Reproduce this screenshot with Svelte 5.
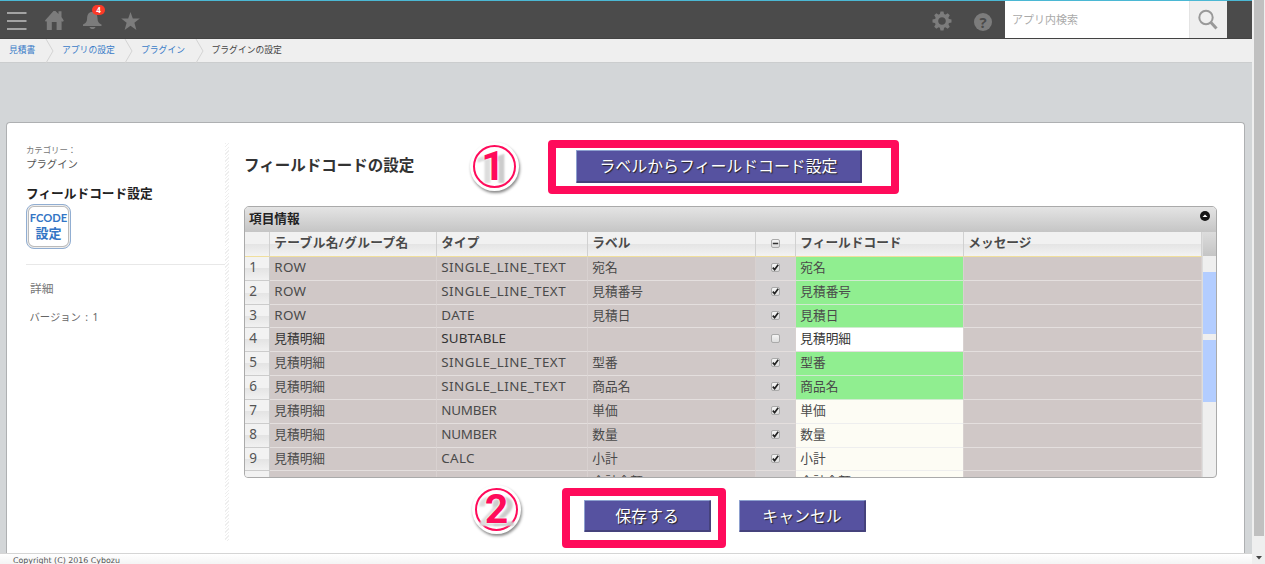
<script>
  const rows = [
    ['1', 'ROW', 'SINGLE_LINE_TEXT', '宛名', true, 'green'],
    ['2', 'ROW', 'SINGLE_LINE_TEXT', '見積番号', true, 'green'],
    ['3', 'ROW', 'DATE', '見積日', true, 'green'],
    ['4', '見積明細', 'SUBTABLE', '', false, 'white', '見積明細'],
    ['5', '見積明細', 'SINGLE_LINE_TEXT', '型番', true, 'green'],
    ['6', '見積明細', 'SINGLE_LINE_TEXT', '商品名', true, 'green'],
    ['7', '見積明細', 'NUMBER', '単価', true, 'cream'],
    ['8', '見積明細', 'NUMBER', '数量', true, 'cream'],
    ['9', '見積明細', 'CALC', '小計', true, 'cream'],
    ['', '', '', '合計金額', false, 'cream']
  ];
  const crumbs = [['見積書', 53], ['アプリの設定', 79], ['プラグイン', 70.5]];
  const tracking = { ROW: 0.3, SINGLE_LINE_TEXT: 0.45, DATE: 0.4, SUBTABLE: 0.1, NUMBER: -0.2, CALC: 0.3 };
</script>

<div class="window">
  <div class="page">
    <header>
      <svg class="menu" viewBox="0 0 20 20"><path d="M0 2h19.500M0 10h19.500M0 18h19.500" stroke="#a3a3a3" stroke-width="2" /></svg>
      <svg class="home" viewBox="0 0 20 20"><path d="M0 10.500 8.500 1h2l3 3V1.200h3V7l2.300 3.500-.8 1.200-1.400-.5V20h-5v-8H6.800v8h-5v-8.800l-1 .5z" fill="#7c7c7c" /></svg>
      <div class="bell">
        <svg viewBox="0 0 20 20"><path d="M9.300 2c3.800 0 5 2.700 5.200 6.200.2 3.900 1.300 4.700 4 6.300v1.500H0v-1.500c2.800-1.600 3.900-2.400 4.100-6.300C4.300 4.700 5.500 2 9.300 2zM6.500 17h6c-1 2.800-5 2.800-6 0z" fill="#7c7c7c" /></svg>
        <b>4</b>
      </div>
      <svg class="star" viewBox="0 0 20 20"><path d="m9.500 1 2.300 6.500h7l-5.400 4.300 2 7.200-5.900-4.200-5.900 4.200 2-7.200L.2 7.500h7z" fill="#7c7c7c" /></svg>
      <div class="grow"></div>
      <svg class="gear" viewBox="-10 -10 20 20">
        {#each [0, 45, 90, 135, 180, 225, 270, 315] as a}
          <path d="M-2.300-6-1.500-9.500h3L2.300-6z" fill="#7c7c7c" transform="rotate({a})" />
        {/each}
        <circle r="5.500" fill="none" stroke="#7c7c7c" stroke-width="3.400" />
      </svg>
      <div class="help">?</div>
      <div class="search">アプリ内検索</div>
      <div class="find"><svg viewBox="0 0 20 20"><circle cx="8" cy="7.500" r="6.700" fill="none" stroke="#999" stroke-width="2" /><path d="m12.500 12 6 6.500" stroke="#999" stroke-width="3" /></svg></div>
    </header>
    <nav>
      {#each crumbs as [name, w]}
        <a style="width:{w}px">{name}<svg viewBox="0 0 8 24"><path d="M0 0 7 12 0 24" fill="none" stroke="#d4d4d4" /></svg></a>
      {/each}
      <span>プラグインの設定</span>
    </nav>
    <div class="card">
      <aside>
        <small>カテゴリー：</small>
        <p class="cat">プラグイン</p>
        <h2>フィールドコード設定</h2>
        <div class="logo"><b>FCODE</b><b class="jp">設定</b></div>
        <hr />
        <p class="detail">詳細</p>
        <p class="version">バージョン<i>:</i>1</p>
      </aside>
      <div class="hatch"></div>
      <main>
        <div class="head">
          <h1>フィールドコードの設定</h1>
          <button class="wide">ラベルからフィールドコード設定</button>
        </div>
        <section class="grid">
          <div class="title">項目情報<svg viewBox="0 0 12 12"><circle cx="6" cy="6" r="5" fill="#151515" /><path d="M3.500 7 6 4.600 8.500 7z" fill="#fff" /></svg></div>
          <div class="body">
            <div class="table">
              <div class="tr th">
                <div></div><div class="group">テーブル名/グループ名</div><div>タイプ</div><div>ラベル</div><div class="ck"><span class="box"><svg viewBox="0 0 10 10"><path d="M2 5h6" stroke="#333" stroke-width="1.600" /></svg></span></div><div>フィールドコード</div><div>メッセージ</div>
              </div>
              {#each rows as r}
                <div class="tr" class:dark={r[0] === '4'}>
                  <div class="num">{r[0]}</div>
                  <div class:latin={r[1] in tracking} style="letter-spacing:{tracking[r[1]] ?? 0}px">{r[1]}</div>
                  <div class="latin" style="letter-spacing:{tracking[r[2]] ?? 0}px">{r[2]}</div>
                  <div>{r[3]}</div>
                  <div class="ck"><span class="box">{#if r[4]}<svg viewBox="0 0 10 10"><path d="m2 5.200 2 2.200L8 2" fill="none" stroke="#222" stroke-width="1.900" /></svg>{/if}</span></div>
                  <div class={r[5]}>{r[6] ?? r[3]}</div><div></div>
                </div>
              {/each}
            </div>
            <div class="bar"><div class="corner"></div><div class="thumb"></div><div class="thumb"></div></div>
          </div>
        </section>
        <div class="actions"><button>保存する</button><button>キャンセル</button></div>
      </main>
    </div>
    <footer>Copyright (C) 2016 Cybozu</footer>
  </div>
  <div class="scroll"><div></div><svg viewBox="0 0 6 4"><path d="M0 0h6L3 3.500z" fill="#444" /></svg></div>
  <div class="frame f1"></div>
  <div class="frame f2"></div>
  <div class="mark m1"><span>1</span></div>
  <div class="mark m2"><span>2</span></div>
</div>

<style>
  :global(body) { margin: 0; overflow: hidden; }
  * { box-sizing: border-box; }
  p, h1, h2 { margin: 0; }
  .window { position: relative; display: flex; width: 1265px; height: 564px; overflow: hidden; font-family: "Noto Sans", "Noto Sans CJK JP", sans-serif; color: #444; }
  .page { width: 1252px; height: 564px; display: flex; flex-direction: column; background: #d3d6d8; }
  svg { display: block; flex: none; overflow: visible; }
  header { height: 39px; flex: none; display: flex; align-items: center; background: #4b4b4b; border-top: 1px solid #4bb8d4; border-bottom: 1px solid #434343; padding: 0 25px 0 7px; }
  header svg { width: 20px; height: 20px; }
  .menu { margin-top: 3px; }
  .home { margin-left: 18px; }
  .bell { position: relative; margin: 1px 0 0 18px; }
  .bell b { position: absolute; left: 9px; top: -5px; width: 13px; height: 10px; border-radius: 5px; background: #fb3a28; color: #fff; font-size: 8px; line-height: 10px; text-align: center; }
  .star { margin: 3px 0 0 18px; }
  .grow { flex: 1; }
  .gear { margin-top: 2px; }
  .help { margin: 4px 13px 0 22.500px; width: 18px; height: 18px; border-radius: 50%; background: #7c7c7c; color: #4b4b4b; font: bold 15px/18px "Open Sans", sans-serif; text-align: center; }
  .search { align-self: stretch; width: 184px; background: #fff; color: #aaa; font: 11px/37px "Noto Sans CJK JP", sans-serif; padding-left: 7px; }
  .find { align-self: stretch; width: 38px; background: #efefef; border-left: 1px solid #e4e4e4; display: flex; align-items: center; justify-content: center; padding-right: 2px; }
  nav { height: 24px; flex: none; display: flex; background: #efefef; border-bottom: 1px solid #cbcdce; padding-left: 9px; font: 8.800px/22px "Noto Sans CJK JP", sans-serif; color: #444; }
  nav a { color: #3a7cc8; display: flex; flex: none; justify-content: space-between; padding-right: 8px; white-space: nowrap; }
  nav a svg { width: 8px; height: 24px; }
  .card { height: 431px; margin: 59px 7px 0 6px; flex: none; display: flex; background: #fff; border: 1px solid #aeb0b2; border-bottom: 0; border-radius: 4px 4px 0 0; }
  aside { width: 218px; padding: 19px 0 0 19px; display: flex; flex-direction: column; }
  small { font: 8.400px/14px "Noto Sans CJK JP", sans-serif; color: #777; }
  .cat { font-size: 10.400px; line-height: 14px; color: #555; margin-top: 1px; }
  h2 { font-size: 12.700px; line-height: 20px; margin-top: 12px; color: #222; }
  .logo { width: 45px; height: 45px; margin-top: 1px; border: 1px solid #91aed2; border-radius: 8px; box-shadow: inset 0 0 0 1px #eee, inset 0 0 0 2px #bbb; color: #3375c5; display: flex; flex-direction: column; align-items: center; padding-top: 4px; }
  .logo b { font: bold 11.200px/17px Lato, sans-serif; }
  .logo .jp { font: bold 13px/14px "Noto Sans CJK JP", sans-serif; }
  hr { border: 0; height: 1px; background: #e8e8e8; margin: 15px 0 0; width: 199px; }
  .detail { margin: 14px 0 0 4px; font-size: 11.800px; line-height: 18px; color: #777; }
  .version { margin: 11px 0 0 3.500px; font-size: 10.300px; line-height: 18px; color: #666; }
  .version i { font-style: normal; padding: 0 4.500px; }
  .hatch { width: 4px; height: 398px; margin-top: 20px; background: repeating-linear-gradient(135deg, #eee 0 1px, #fff 1px 2.500px); }
  main { margin-left: 15px; width: 973px; }
  .head { display: flex; height: 83px; padding-top: 27px; }
  h1 { width: 332px; font-size: 15.500px; line-height: 31px; font-weight: 600; color: #333; }
  button { height: 32px; width: 127px; padding: 0; border: 1px solid; border-width: 1px 2px 2px 1px; border-color: #8da0cf #45427c #45427c #8da0cf; border-radius: 1px; background: #5652a0; color: #fff; font: 15.900px/28px "Noto Sans CJK JP", sans-serif; text-shadow: 1px 1px 1px #222; }
  .wide { width: 286px; height: 33px; }
  .grid { height: 272px; border: 1px solid #aaa; border-radius: 5px 5px 4px 4px; overflow: hidden; background: #efefef; }
  .title { height: 25px; display: flex; justify-content: space-between; background: linear-gradient(#e4e4e4, #c5c5c5); padding: 0 5px 0 4px; font-size: 12.700px; line-height: 22px; font-weight: 700; color: #222; }
  .title svg { width: 12px; height: 12px; margin-top: 3px; }
  .body { display: flex; height: 245px; }
  .table { width: 957px; overflow: hidden; }
  .tr { display: grid; grid-template-columns: 25px 167px 151px 168px 40px 168px 238px; height: 23.830px; font-size: 12.700px; line-height: 20px; color: #4a4a4a; }
  .tr > div { background: #d0c8c7; border-bottom: 1.500px solid #e4dfde; border-right: 1px solid #d8d1d0; padding-left: 4.300px; white-space: nowrap; overflow: hidden; }
  .dark { color: #333; }
  .tr > .latin { font-size: 13.400px; }
  .tr > div.num { background: linear-gradient(#f2f2f2 50%, #e4e4e4 50%, #f1f1f1); border-color: #ccc; color: #555; font-size: 13.500px; }
  .tr > .green { background: #90ee90; border-bottom-color: #d0ebd0; }
  .tr > .white { background: #fff; }
  .tr > .cream { background: #fdfcf4; border-bottom-color: #eee; }
  .tr > .ck { background: #d3d0d1; display: flex; align-items: center; justify-content: center; padding: 0; }
  .box { width: 9px; height: 9px; border: 1px solid #aaa; border-radius: 2px; background: linear-gradient(#f5f5f5, #ddd); margin-top: -2px; }
  .box svg { width: 9px; height: 9px; margin: -1px; }
  .th { height: 25px; font-weight: 600; line-height: 21px; }
  .th .group { letter-spacing: .35px; }
  .tr.th > div { background: linear-gradient(#f1f1f1 50%, #e4e4e4 50%, #f3f3f3); border-color: #d1d1d1; border-bottom: 1px solid #f0df9d; }
  .bar { width: 14px; border-left: 1px solid #ddd; }
  .corner { height: 24px; background: linear-gradient(#dcdcdc, #c5c5c5); margin-bottom: 16px; }
  .thumb { height: 62px; background: #b3cdff; margin-bottom: 6px; }
  .actions { display: flex; gap: 28px; margin: 22px 0 0 340px; }
  footer { flex: 1; border-top: 1px solid #d5d5d5; background: linear-gradient(#fff, #f0f0f0); font: 7.900px/14px "DejaVu Sans", Verdana, sans-serif; padding-left: 13px; color: #555; }
  .scroll { width: 13px; background: #efefef; display: flex; flex-direction: column; align-items: center; padding-left: 1px; }
  .scroll div { width: 10px; height: 536px; background: #c0c0c0; }
  .scroll svg { width: 6px; height: 4px; margin-top: 20px; }
  .frame { position: absolute; border: 8px solid #ff0b5b; border-radius: 4px; }
  .f1 { left: 548px; top: 140px; width: 351px; height: 54px; }
  .f2 { left: 562px; top: 488px; width: 164px; height: 60px; }
  .mark { position: absolute; width: 43px; height: 43px; border: 2px solid #ff0b5b; border-radius: 50%; background: #fff; box-shadow: 0 0 0 3px #fff, 1px 2px 3px 3px #888; color: #ff0b5b; display: flex; align-items: center; justify-content: center; font: bold 41px/39px Roboto, sans-serif; text-shadow: 0 0 2px #fff, 0 0 2px #fff, 7px 3px 2px #ccc, -7px 3px 2px #ddd; }
  .m1 { left: 473px; top: 145px; }
  .m1 span { margin-right: 3px; }
  .m2 { left: 475px; top: 488px; }
</style>
